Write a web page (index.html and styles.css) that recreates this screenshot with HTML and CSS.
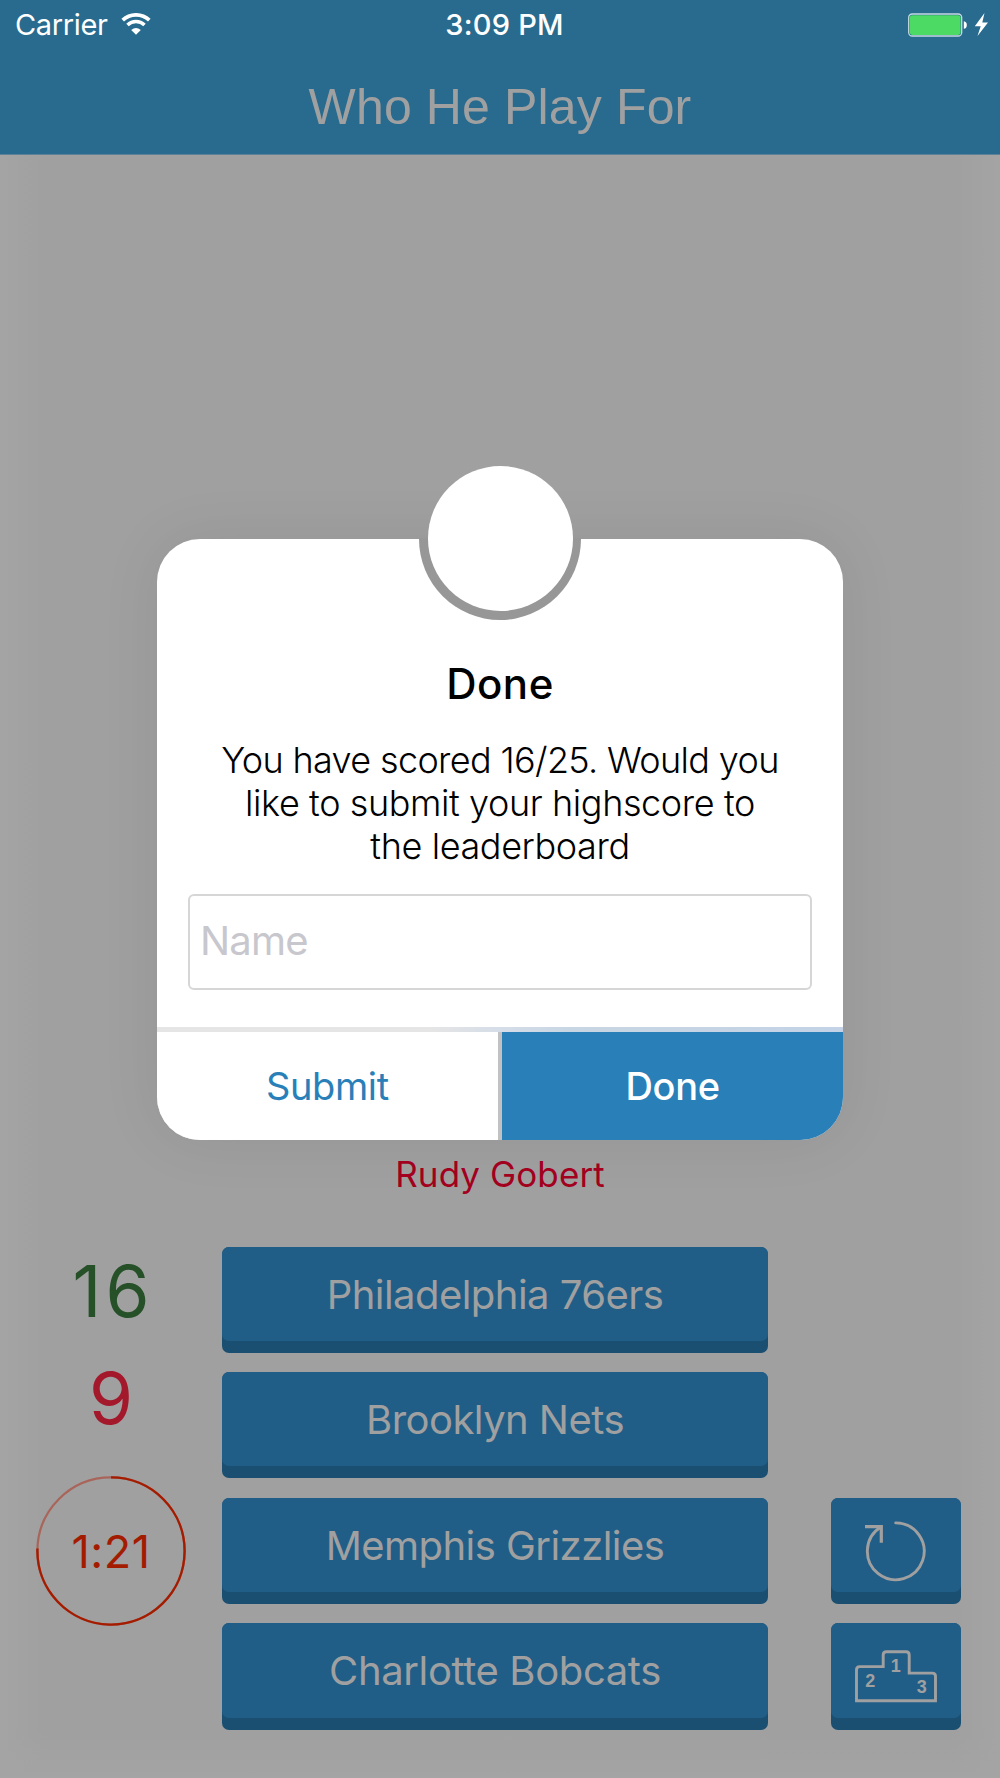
FILE: index.html
```html
<!DOCTYPE html>
<html lang="en">
<head>
<meta charset="utf-8">
<title>Who He Play For</title>
<link rel="stylesheet" href="styles.css">
</head>
<body>
<div class="app">
  <header class="header">
    <div class="status">
      <div class="status-left">
        <span class="carrier">Carrier</span>
        <svg class="wifi" width="30" height="22" viewBox="0 0 30 22">
          <path d="M1.7 7.2A19.2 19.2 0 0 1 28.3 7.2" fill="none" stroke="#fff" stroke-width="3.7"/>
          <path d="M6.5 12A12.3 12.3 0 0 1 23.5 12" fill="none" stroke="#fff" stroke-width="3.5"/>
          <path d="M15 21.8L10.2 17Q15 12.9 19.8 17Z" fill="#fff"/>
        </svg>
      </div>
      <span class="clock">3:09 PM</span>
      <div class="status-right">
        <svg width="82" height="26" viewBox="0 0 82 26">
          <rect x="0.7" y="2" width="53" height="22" rx="3.5" fill="none" stroke="#c5d8e2" stroke-width="1.3"/>
          <rect x="1.8" y="3.2" width="50.8" height="19.8" rx="2.4" fill="#4cd964"/>
          <path d="M55.8 9.2Q58.8 9.6 58.8 13T55.8 16.8Z" fill="#fff"/>
          <path d="M76.5 1L66.8 14.3H72.7L69.5 24L80 10.5H74.3Z" fill="#fff"/>
        </svg>
      </div>
    </div>
    <h1 class="title">Who He Play For</h1>
  </header>

  <main class="game">
    <p class="player">Rudy Gobert</p>
    <div class="board">
      <div class="scores">
        <span class="right-count">16</span>
        <span class="wrong-count">9</span>
        <div class="timer">
          <svg class="timer-ring" width="150" height="150" viewBox="0 0 150 150">
            <circle cx="75" cy="75" r="73.6" fill="none" stroke="#a9655a" stroke-width="2.2"/>
            <path d="M75 1.4A73.6 73.6 0 1 1 1.45 72.5" fill="none" stroke="#a41c00" stroke-width="2.4"/>
          </svg>
          <span class="timer-text">1:21</span>
        </div>
      </div>
      <div class="teams">
        <button class="key team">Philadelphia 76ers</button>
        <button class="key team">Brooklyn Nets</button>
        <button class="key team">Memphis Grizzlies</button>
        <button class="key team charlotte">Charlotte Bobcats</button>
      </div>
      <div class="actions">
        <button class="key" aria-label="Restart">
          <svg width="130" height="94" viewBox="831 1497.5 130 94" fill="none" stroke="#a0a0a0" stroke-width="2.9" stroke-linecap="round">
            <path d="M895.7 1522.4A28.4 28.4 0 1 1 880.9 1526.6"/>
            <path d="M865 1526.2H881.3V1542.3" stroke-linecap="butt" stroke-width="3.2"/>
          </svg>
        </button>
        <button class="key" aria-label="Leaderboard">
          <svg width="130" height="94" viewBox="831 1623 130 94">
            <path d="M856.5 1700.7V1669.8Q856.5 1666.6 859.7 1666.6H883.2V1655Q883.2 1651.8 886.4 1651.8H906Q909.2 1651.8 909.2 1655V1673.1H932.3Q935.5 1673.1 935.5 1676.3V1700.7Z" fill="none" stroke="#a0a0a0" stroke-width="2.9"/>
            <g class="podium-num"><text x="895.7" y="1671.6">1</text><text x="870.3" y="1686.6">2</text><text x="921.8" y="1693.2">3</text></g>
          </svg>
        </button>
      </div>
    </div>
  </main>

  <div class="overlay">
    <section class="dialog">
      <div class="notch"></div>
      <div class="badge"></div>
      <div class="dialog-body">
        <h2 class="dialog-title">Done</h2>
        <p class="message"><span class="first-line">You have scored 16/25. Would you</span><br>like to submit your highscore to<br>the leaderboard</p>
        <input class="name" type="text" placeholder="Name">
      </div>
      <div class="dialog-actions">
        <button class="submit">Submit</button>
        <button class="done">Done</button>
      </div>
    </section>
  </div>
</div>
</body>
</html>
```
FILE: styles.css
```css
* { box-sizing: border-box; }

body {
  margin: 0;
  font-family: Inter, "Liberation Sans", sans-serif;
}

h1, h2, p { margin: 0; font-weight: 400; }

button { border: 0; padding: 0; font-family: inherit; }

.app {
  position: relative;
  width: 1000px;
  height: 1778px;
  overflow: hidden;
  display: flex;
  flex-direction: column;
}

/* Navigation bar */
.header {
  height: 155px;
  background: #286b8f;
  border-bottom: 1px solid #5d8298;
  color: #fff;
}

.status {
  display: grid;
  grid-template-columns: 1fr auto 1fr;
  align-items: center;
  height: 50px;
  padding: 0 10px 0 15px;
  line-height: 50px;
}

.status-left { display: flex; align-items: center; gap: 13px; }
.status-right { display: flex; justify-content: flex-end; }
.carrier { font-size: 29px; letter-spacing: -0.36px; }
.wifi { margin-top: -3px; }
.clock { font-size: 29px; font-weight: 550; letter-spacing: 0.25px; margin-left: 4px; }

.title {
  height: 104px;
  padding-top: 5px;
  font: 400 50px/104px "Liberation Sans", sans-serif;
  letter-spacing: 0.14px;
  text-align: center;
  color: #a0a0a0;
}

/* Game */
.game {
  flex: 1;
  padding-top: 999px;
  background:
    linear-gradient(90deg, #a4a4a4, transparent 45px calc(100% - 45px), #a4a4a4),
    linear-gradient(0deg, #a4a4a4, transparent 45px),
    #a0a0a0;
}

.player {
  height: 92.5px;
  font-size: 35px;
  line-height: 40px;
  letter-spacing: 0.1px;
  text-align: center;
  color: #a4001f;
}

.board {
  display: grid;
  grid-template-columns: 222px 546px 193px;
}

.scores {
  display: flex;
  flex-direction: column;
  align-items: center;
  font-size: 71px;
}

.right-count { line-height: 88px; letter-spacing: 4px; margin-right: -4px; color: #265128; }
.wrong-count { line-height: 88px; margin-top: 19px; color: #a4182b; }

.timer {
  display: grid;
  place-items: center;
  width: 150px;
  height: 150px;
  margin-top: 34.5px;
}

.timer > * { grid-area: 1 / 1; }
.timer-text { padding-top: 1px; font-size: 45px; line-height: 50px; letter-spacing: 0.5px; color: #a41c00; }

.teams, .actions {
  display: flex;
  flex-direction: column;
  gap: 19.2px;
}

.actions { justify-content: flex-end; padding-left: 63px; }

/* Raised key: lighter face over a darker base */
.key {
  position: relative;
  z-index: 0;
  display: flex;
  align-items: flex-start;
  justify-content: center;
  height: 106.4px;
  border-radius: 7px;
  background: #1a4f72;
  color: #a0a0a0;
}

.key::before {
  content: "";
  position: absolute;
  inset: 0 0 12px;
  z-index: -1;
  border-radius: 7px;
  background: #205e88;
}

.key svg { display: block; }

.team {
  font-size: 40px;
  line-height: 96px;
  letter-spacing: -0.54px;
}

.charlotte { letter-spacing: -0.38px; }

.podium-num {
  font: 700 18px "Liberation Sans", sans-serif;
  fill: #a0a0a0;
  text-anchor: middle;
}

/* Dialog */
.overlay {
  position: absolute;
  inset: 0;
  padding: 538.5px 157px 0;
}

.dialog {
  position: relative;
  width: 686px;
  height: 601.5px;
  border-radius: 43px;
  background: #fff;
  box-shadow: 0 0 60px rgba(0, 0, 0, 0.08);
}

.notch {
  position: absolute;
  left: 262px;
  top: -1px;
  width: 162px;
  height: 82.5px;
  border-radius: 0 0 81px 81px;
  background: #979797;
}

.badge {
  position: absolute;
  left: 270.5px;
  top: -72.5px;
  width: 145px;
  height: 145px;
  border-radius: 50%;
  background: #fff;
}

.dialog-body {
  height: 488px;
  padding: 120px 31px 0;
  text-align: center;
}

.dialog-title {
  font-size: 42px;
  font-weight: 550;
  line-height: 50px;
  letter-spacing: 0.5px;
}

.message {
  margin: 30px -20px 0;
  font-size: 36px;
  font-weight: 330;
  line-height: 43.3px;
  letter-spacing: -0.4px;
}

.first-line { letter-spacing: -0.65px; }

.name {
  display: block;
  width: 624px;
  height: 96px;
  margin-top: 26px;
  padding: 0 10px 3px;
  border: 2px solid #d6d6d6;
  border-radius: 6px;
  font: 400 40px Inter, sans-serif;
  letter-spacing: -0.8px;
}

.name::placeholder { color: #c7c7cd; opacity: 1; }

.dialog-actions {
  display: grid;
  grid-template-columns: 1fr 1fr;
  column-gap: 4.5px;
  height: 113.5px;
  padding-top: 5px;
  border-radius: 0 0 43px 43px;
  overflow: hidden;
  background:
    linear-gradient(90deg, #e5e5e5 40%, #d5dde8 50%, #c8d6e3 60%, #c3d2e6) top / 100% 5px no-repeat,
    #c1c1c1;
}

.dialog-actions button { font-size: 38px; line-height: 109px; }
.submit { background: #fff; color: #2980b9; letter-spacing: -0.4px; }
.done { background: #2980b9; color: #fff; font-weight: 500; letter-spacing: -0.3px; }
```
